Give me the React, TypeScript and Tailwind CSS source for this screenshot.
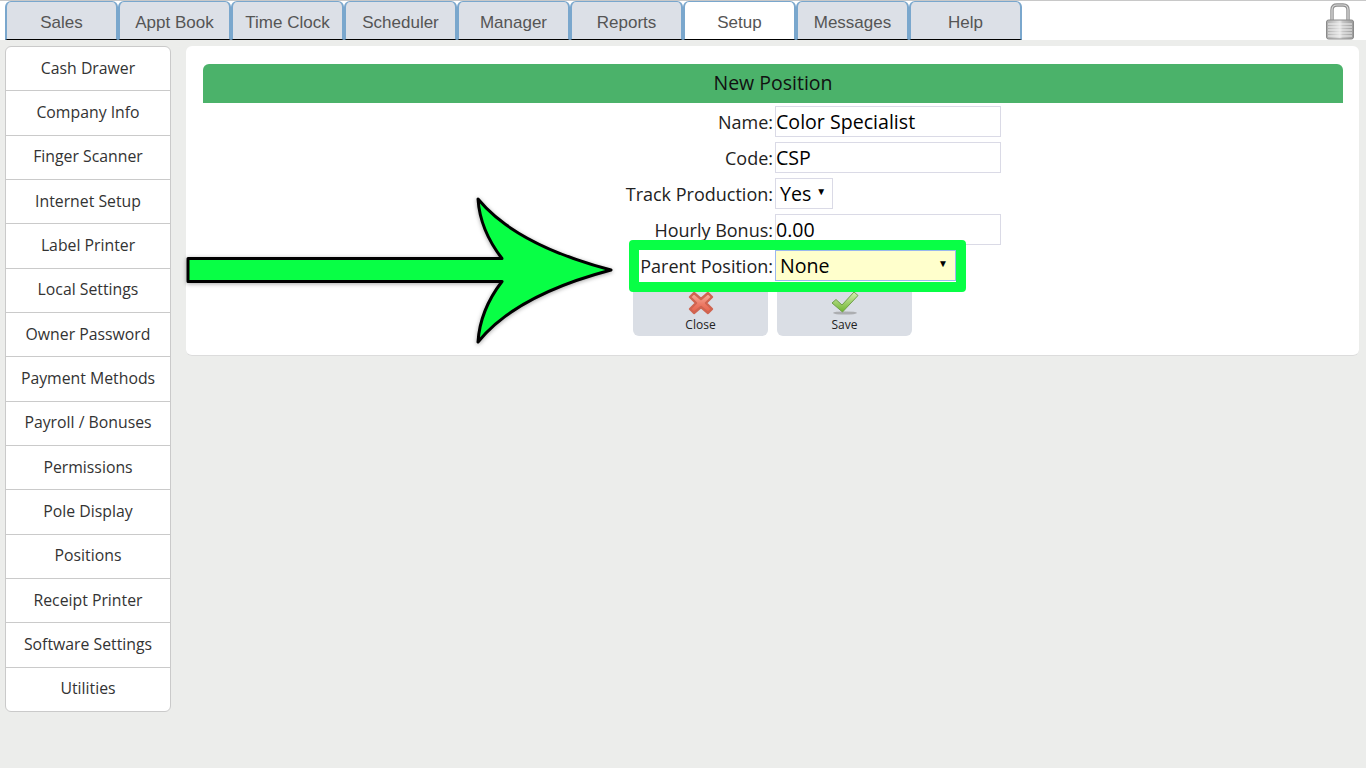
import type { ReactNode } from "react";

const tabs = ["Sales", "Appt Book", "Time Clock", "Scheduler", "Manager", "Reports", "Setup", "Messages", "Help"];

const menu = [
  "Cash Drawer",
  "Company Info",
  "Finger Scanner",
  "Internet Setup",
  "Label Printer",
  "Local Settings",
  "Owner Password",
  "Payment Methods",
  "Payroll / Bonuses",
  "Permissions",
  "Pole Display",
  "Positions",
  "Receipt Printer",
  "Software Settings",
  "Utilities",
];

function LockIcon() {
  return (
    <svg width="32" height="38" viewBox="0 0 32 38" className="mt-[1px]">
      <defs>
        <linearGradient id="lockBody" x1="0" x2="1" y1="0" y2="0">
          <stop offset="0" stopColor="#a9a9a9" />
          <stop offset="0.5" stopColor="#e6e6e6" />
          <stop offset="0.6" stopColor="#c6c6c6" />
          <stop offset="1" stopColor="#9b9b9b" />
        </linearGradient>
      </defs>
      <path d="M8 19V8C8 4 10 3 13 3H19C22 3 24 4 24 8V19" fill="none" stroke="#8f8f8f" strokeWidth="3.4" />
      <path d="M8 19V8C8 4 10 3 13 3H19C22 3 24 4 24 8V19" fill="none" stroke="#dcdcdc" strokeWidth="1.2" />
      <rect x="2.5" y="18" width="27" height="19" rx="2" fill="url(#lockBody)" stroke="#8a8a8a" />
      <path d="M4 22H28M4 25H28M4 28H28M4 31H28M4 34H28" stroke="#f2f2f2" strokeWidth="1.1" />
    </svg>
  );
}

function CloseIcon() {
  return (
    <svg width="28" height="26" viewBox="0 0 28 26">
      <defs>
        <linearGradient id="closeFill" x1="0" x2="0" y1="0" y2="1">
          <stop offset="0" stopColor="#f8b3a3" />
          <stop offset="0.55" stopColor="#ec7b66" />
          <stop offset="1" stopColor="#e8604a" />
        </linearGradient>
      </defs>
      <path
        d="M7 3L14 9L21 3L25 7L19 13L25 19L21 23L14 17L7 23L3 19L9 13L3 7Z"
        fill="url(#closeFill)"
        stroke="#cf6450"
        strokeWidth="2.4"
        strokeLinejoin="round"
      />
    </svg>
  );
}

function SaveIcon() {
  return (
    <svg width="30" height="26" viewBox="0 0 30 26">
      <defs>
        <linearGradient id="saveFill" x1="0" x2="0" y1="0" y2="1">
          <stop offset="0" stopColor="#d6efb4" />
          <stop offset="1" stopColor="#6eb52c" />
        </linearGradient>
      </defs>
      <ellipse cx="15" cy="23" rx="12" ry="1.6" fill="#8d8d8d" opacity="0.6" />
      <path
        d="M2 13L6 9.5L12 15L24 2L28 5.5L12.5 22Z"
        fill="url(#saveFill)"
        stroke="#6f9f4a"
        strokeWidth="1"
        strokeLinejoin="round"
      />
    </svg>
  );
}

function Row({ label, children }: { label: string; children: ReactNode }) {
  return (
    <div className="flex h-[36px] items-start">
      <div className="w-[570px] pt-[1px] text-right text-[18px] leading-[30px] text-[#222]">{label}</div>
      <div className="ml-[2px]">{children}</div>
    </div>
  );
}

function TextBox({ value }: { value: string }) {
  return (
    <div className="h-[31px] w-[226px] border border-[#dadae6] bg-white text-[19.6px] leading-[29px] text-black">
      {value}
    </div>
  );
}

function ToolButton({ label, icon }: { label: string; icon: ReactNode }) {
  return (
    <div className="flex h-[50px] w-[135px] flex-col items-center justify-end rounded-b-[6px] bg-[#dadee5] pb-[4px]">
      {icon}
      <span className="mt-[1px] text-[12px] leading-[15px] text-[#222]">{label}</span>
    </div>
  );
}

export default function App() {
  return (
    <div className="h-[768px] w-[1366px] overflow-hidden bg-[#ecedeb] font-['Open_Sans',sans-serif]">
      <div className="flex h-[40px] items-start justify-between border-t border-[#c8c8c8] bg-white pl-[5px] pr-[10px]">
        <div className="flex">
          {tabs.map((tab) => (
            <div
              key={tab}
              className={`flex h-[39px] w-[113px] items-center justify-center rounded-t-[6px] border-x-2 border-t border-b border-x-[#7aa7cd] border-t-[#7aa7cd] border-b-black pt-[5px] font-['Liberation_Sans',sans-serif] text-[17px] text-[#555] ${
                tab === "Setup" ? "bg-white" : "bg-[#dce0e7]"
              }`}
            >
              {tab}
            </div>
          ))}
        </div>
        <LockIcon />
      </div>

      <div className="flex items-start gap-[15px] pl-[5px] pr-[7px] pt-[6px]">
        <div className="flex h-[666px] w-[166px] flex-col rounded-[6px] border border-[#cacaca] bg-white">
          {menu.map((item, i) => (
            <div
              key={item}
              className={`flex flex-1 items-center justify-center pb-[0.3px] text-[15.8px] text-[#333] ${
                i < menu.length - 1 ? "border-b border-[#cacaca]" : ""
              }`}
            >
              {item}
            </div>
          ))}
        </div>

        <div className="relative h-[310px] flex-1 rounded-[6px] border-b border-[#dcdcdc] bg-white pl-[17px] pr-[16px] pt-[18px]">
          <div className="flex h-[39px] items-center justify-center rounded-t-[6px] bg-[#4bb26a] pb-[1px] text-[19.5px] text-[#111]">
            New Position
          </div>
          <div className="pt-[3px]">
            <Row label="Name:">
              <TextBox value="Color Specialist" />
            </Row>
            <Row label="Code:">
              <TextBox value="CSP" />
            </Row>
            <Row label="Track Production:">
              <div className="flex h-[31px] w-[58px] items-center border border-[#dadae6] bg-white pl-[4px] text-[19.6px] text-black">
                Yes
                <span className="ml-[5px] mt-[-5px] text-[10px]">▼</span>
              </div>
            </Row>
            <Row label="Hourly Bonus:">
              <TextBox value="0.00" />
            </Row>
            {/* highlighted row: the green frame sits over its neighbours */}
            <div className="relative z-10 -my-[10px] ml-[426px] box-content flex h-[32px] w-[317px] items-start rounded-[4px] border-[10px] border-[#08ff45] bg-white">
              <div className="w-[134px] text-right text-[18px] leading-[32px] text-[#222]">Parent Position:</div>
              <div className="ml-[2px] flex h-[31px] w-[181px] items-center justify-between border border-[#9ab8ee] bg-[#ffffcc] pl-[4px] pr-[7px] text-[19.6px] text-black">
                None
                <span className="mt-[-5px] text-[10px]">▼</span>
              </div>
            </div>
            <div className="ml-[430px] mt-[4px] flex gap-[9px]">
              <ToolButton label="Close" icon={<CloseIcon />} />
              <ToolButton label="Save" icon={<SaveIcon />} />
            </div>
          </div>

          {/* annotation arrow pointing at the Parent Position row */}
          <svg
            className="absolute left-[-1px] top-[150px] z-20 drop-shadow-[0_1px_2px_rgba(0,0,0,0.35)]"
            width="430"
            height="150"
            viewBox="185 196 430 150"
          >
            <path
              d="M188 258.5H502Q480 230 478 199Q516 245 611 270Q516 295 478 342Q480 310 502 281.5H188Z"
              fill="#08ff45"
              stroke="#000"
              strokeWidth="3"
              strokeLinejoin="round"
            />
          </svg>
        </div>
      </div>
    </div>
  );
}
